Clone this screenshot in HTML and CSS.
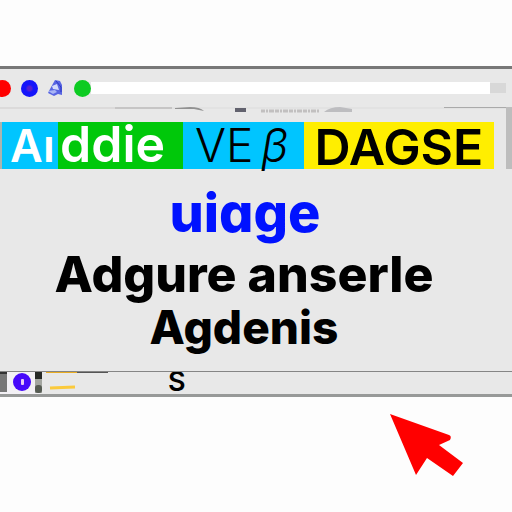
FILE: index.html
```
<!DOCTYPE html>
<html lang="en">
<head>
    <meta charset="UTF-8">
    <meta name="viewport" content="width=device-width, initial-scale=1.0">
    <title>Aıddie</title>
    <link rel="stylesheet" href="styles.css">
</head>
<body>
    <div class="window">
        <div class="toolbar">
            <span class="dot red"></span>
            <span class="dot blue"></span>
            <svg class="badge" width="16" height="18" viewBox="0 0 16 18">
                <path d="M8 1 L13 2 L15 6 V16 L11 15 L7 17 L1 14 L3 10 Z" fill="#5865e2"/>
                <path d="M5 7 L10 5 L12 11 L6 10 Z" fill="#d5dcfa"/>
                <path d="M1 12 L8 11 L10 13 L6 15 Z" fill="#a9b5f5"/>
                <path d="M9 2 L14 8 L14 13" fill="none" stroke="#2b35c4" stroke-width="1"/>
            </svg>
            <span class="dot green"></span>
            <input class="address" type="text" aria-label="Address">
            <span class="stub"></span>
        </div>
        <div class="page">
            <svg class="marks" viewBox="0 0 512 15" height="15" preserveAspectRatio="none">
                <path d="M0 1 H115" stroke="#cfcccc" stroke-width="1"/>
                <path d="M115 1 H512" stroke="#dcdcdc" stroke-width="1"/>
                <path d="M115 1 H172" stroke="#aaa8a8" stroke-width="1"/>
                <path d="M175 1 L190 0 Q200 0 204 4 L194 2 H175 Z" fill="#929292"/>
                <path d="M444 0 H506" stroke="#aaa" stroke-width="2"/>
                <rect x="235" y="1" width="11" height="4" fill="#62626e"/>
                <path d="M261 4 H319" stroke="#c2c0c0" stroke-width="3" stroke-dasharray="4 1 2 1 5 1"/>
                <path d="M324 5 Q330 0 340 0 L352 2 V5 Z" fill="#bdbdc0"/>
            </svg>
            <div class="logos">
                <span class="tile cyan first">Aı</span>
                <span class="tile green-tile">ddie</span>
                <span class="tile cyan thin">VE<i>β</i></span>
                <span class="tile yellow">DAGSE</span>
            </div>
            <h1>uiage</h1>
            <h2>Adgure anserle</h2>
            <h3>Agdenis</h3>
            <span class="edge"></span>
        </div>
        <div class="status">
            <svg width="110" height="23" viewBox="0 0 110 23">
                <rect x="0" y="0" width="40" height="22" fill="#f3f1f5"/>
                <rect x="0" y="0" width="7" height="20" fill="#777"/>
                <rect x="0" y="0" width="7" height="2" fill="#333"/>
                <circle cx="22" cy="10" r="9" fill="#4708fa"/>
                <rect x="21" y="7" width="3" height="6" rx="1" fill="#e8c9f4"/>
                <rect x="35" y="0" width="7" height="21" fill="#a3a6a0"/>
                <rect x="35" y="0" width="7" height="7" fill="#262926"/>
                <rect x="35" y="13" width="7" height="8" rx="3" fill="#555b52"/>
                <rect x="46" y="0" width="31" height="1" fill="#e9ac22"/>
                <rect x="77" y="0" width="31" height="1" fill="#555"/>
                <path d="M50 16 L75 15" stroke="#fbca3c" stroke-width="3"/>
            </svg>
            <span class="letter">S</span>
        </div>
    </div>
    <svg class="pointer" width="74" height="64" viewBox="0 0 74 64">
        <path d="M0 0 L59 21 Q62 22 60 26 L49 31 L73 49 L63 62 L37 44 L26 61 Z" fill="#ff0000"/>
    </svg>
</body>
</html>
```
FILE: styles.css
```
* {
    box-sizing: border-box;
}
body {
    margin: 0;
    padding-top: 66px;
    font-family: Inter, "Liberation Sans", sans-serif;
    background-color: #fdfdfd;
    color: #000;
}
.window {
    background-color: #e8e8e8;
    border-top: 3px solid #787878;
    border-bottom: 3px solid #979998;
}
.toolbar {
    display: flex;
    align-items: center;
    height: 38px;
    padding-right: 6px;
}
.dot {
    flex: none;
    width: 17px;
    height: 17px;
    border-radius: 50%;
}
.red {
    margin-left: -6px;
    background-color: #ff0000;
}
.blue {
    margin-left: 10px;
    background-color: #1515fa;
    background-image: radial-gradient(#5520d0 2px, #1515fa 4px);
}
.badge {
    flex: none;
    margin: 0 11px 0 9px;
}
.green {
    background-color: #0dcb22;
}
.address {
    flex: 1;
    min-width: 0;
    height: 12px;
    padding: 0;
    border: 0;
    background-color: #fff;
}
.stub {
    width: 16px;
    height: 10px;
    background-color: #d8d8d8;
}
.page {
    position: relative;
    padding-bottom: 18px;
    border-bottom: 1px solid #858585;
    text-align: center;
}
.marks {
    display: block;
    width: 100%;
}
.logos {
    display: grid;
    grid-template-columns: 58fr 125fr 121fr 190fr;
    height: 47px;
    margin-right: 18px;
    white-space: nowrap;
}
.tile {
    min-width: 0;
    height: 47px;
    text-align: left;
}
.cyan {
    background-color: #00c5ff;
}
.first {
    padding-left: 8px;
    border-left: 2px solid #aab5b0;
    color: #fff;
    font-size: 45px;
    font-weight: 600;
    line-height: 48px;
}
.green-tile {
    padding-left: 2px;
    background-color: #00c80a;
    color: #fff;
    font-size: 50px;
    font-weight: 600;
    line-height: 44px;
}
.thin {
    padding-left: 12px;
    font-size: 46px;
    font-weight: 300;
    line-height: 47px;
}
.thin i {
    margin-left: 8px;
}
.yellow {
    background-color: #ffee00;
    font-size: 50px;
    font-weight: 600;
    line-height: 50px;
    text-align: center;
}
h1, h2, h3 {
    margin: 0;
    font-weight: 800;
}
h1 {
    padding-top: 10px;
    padding-right: 22px;
    color: #0012ff;
    font-size: 54px;
    font-feature-settings: "cv11";
    line-height: 68px;
}
h2 {
    padding-right: 24px;
    font-size: 50px;
    line-height: 54px;
}
h3 {
    padding-right: 24px;
    font-size: 46px;
    line-height: 52px;
}
.edge {
    position: absolute;
    top: 0;
    right: 0;
    width: 6px;
    height: 62px;
    background-color: #bdbdbd;
}
.status {
    display: flex;
    height: 22px;
}
.letter {
    margin-left: 58px;
    font-size: 27px;
    font-weight: 600;
    line-height: 20px;
}
.pointer {
    display: block;
    margin: 17px 0 0 390px;
}
```
